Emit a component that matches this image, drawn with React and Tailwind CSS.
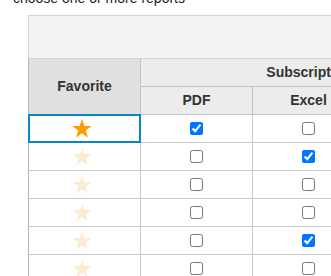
import React from "react";

const rows = [
  { fav: true, pdf: true, excel: false },
  { fav: false, pdf: false, excel: true },
  { fav: false, pdf: false, excel: false },
  { fav: false, pdf: false, excel: false },
  { fav: false, pdf: false, excel: true },
  { fav: false, pdf: false, excel: false },
];

function Star({ filled }) {
  return (
    <svg width="20" height="19" viewBox="0 0 20 19">
      <polygon
        points="10,0 12.4,6.9 19.6,7 13.8,11.4 15.9,18.4 10,14.2 4.1,18.4 6.2,11.4 0.4,7 7.6,6.9"
        fill={filled ? "#ff9a00" : "#fdecd4"}
      />
    </svg>
  );
}

function Box({ checked }) {
  return (
    <input
      type="checkbox"
      checked={checked}
      readOnly
      className="m-0 w-[13px] h-[13px]"
    />
  );
}

export default function App() {
  return (
    <div
      className="w-[331px] h-[276px] overflow-hidden bg-white"
      style={{ fontFamily: '"Liberation Sans", Arial, sans-serif' }}
    >
      <div className="pl-[13px] mt-[-10px] text-[14px] leading-[16px] text-[#222] whitespace-nowrap">
        choose one or more reports
      </div>
      <div className="ml-[28px] mt-[9px] w-[600px]">
        <div className="h-[44px] border border-[#d3d3d3] bg-[#f2f3f5]" />
        <div className="border-l border-[#b8b8b8] w-max">
          <div className="flex">
            <div className="w-[112px] h-[56px] bg-[#e0e0e0] border-r border-b border-[#c4c4c4] flex items-center justify-center text-[14px] font-bold text-[#333]">
              Favorite
            </div>
            <div className="flex flex-col">
              <div className="h-[28px] w-[336px] bg-[#ececec] border-b border-[#c4c4c4] flex items-center justify-center pl-[8px] text-[14px] font-bold text-[#333]">
                Subscriptions
              </div>
              <div className="flex">
                {["PDF", "Excel", "CSV"].map((h) => (
                  <div
                    key={h}
                    className="w-[112px] h-[28px] bg-[#ececec] border-r border-b border-[#c4c4c4] flex items-center justify-center text-[14px] font-bold text-[#333]"
                  >
                    {h}
                  </div>
                ))}
              </div>
            </div>
          </div>
          {rows.map((r, i) => (
            <div key={i} className="flex">
              <div className="relative w-[112px] h-[28px] border-r border-b border-[#c8c8c8] flex items-center justify-center pr-[5px]">
                <Star filled={r.fav} />
                {i === 0 && (
                  <div className="absolute -inset-px border-2 border-[#0b87c9]" />
                )}
              </div>
              <div className="w-[112px] h-[28px] border-r border-b border-[#c8c8c8] flex items-center justify-center">
                <Box checked={r.pdf} />
              </div>
              <div className="w-[112px] h-[28px] border-r border-b border-[#c8c8c8] flex items-center justify-center">
                <Box checked={r.excel} />
              </div>
              <div className="w-[112px] h-[28px] border-r border-b border-[#c8c8c8] flex items-center justify-center">
                <Box checked={false} />
              </div>
            </div>
          ))}
        </div>
      </div>
    </div>
  );
}
